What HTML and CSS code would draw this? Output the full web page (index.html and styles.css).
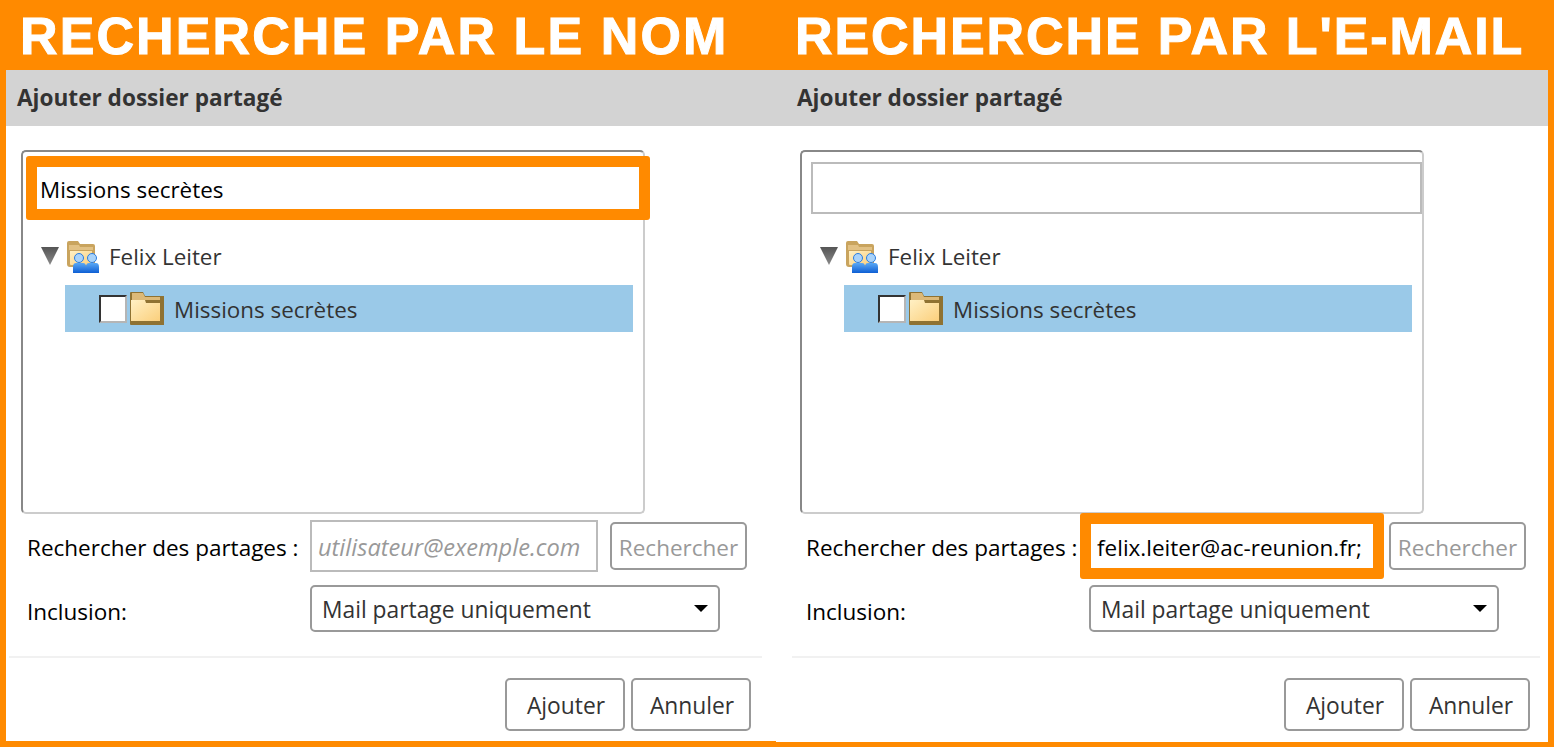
FILE: index.html
```html
<!DOCTYPE html>
<html lang="fr">
<head>
<meta charset="utf-8">
<title>Ajouter dossier partagé</title>
<link rel="stylesheet" href="styles.css">
</head>
<body>
<svg class="defs" width="0" height="0" aria-hidden="true">
  <defs>
    <linearGradient id="fold" x1="0" y1="0" x2="1" y2="1"><stop offset="0" stop-color="#fff0c4"/><stop offset="1" stop-color="#fbcf7c"/></linearGradient>
    <linearGradient id="user" x1="0" y1="0" x2="0" y2="1"><stop offset="0" stop-color="#5aa8f5"/><stop offset="1" stop-color="#0e5fd4"/></linearGradient>
    <linearGradient id="tri" x1="0" y1="0" x2="0" y2="1"><stop offset="0" stop-color="#555"/><stop offset="1" stop-color="#8a8a8a"/></linearGradient>
    <symbol id="shared" viewBox="0 0 32 33">
      <path d="M0 3q0-2 2-2h9l2 3h13q2 0 2 2v21H3q-3 0-3-3Z" fill="#c9a45e"/>
      <path d="M2 5h10l1 2h13v3H2Z" fill="#e2c184"/>
      <path d="M3 11h22v14H4q-1 0-1-1Z" fill="url(#fold)"/>
      <circle cx="12" cy="18" r="4.5" fill="#a9d3fa" stroke="#2b7de0"/>
      <circle cx="25" cy="18" r="4.5" fill="#a9d3fa" stroke="#2b7de0"/>
      <path d="M6 33v-6q0-4 3-4h7q3 0 3 4v6Z" fill="url(#user)"/>
      <path d="M19 33v-6q0-4 3-4h7q3 0 3 4v6Z" fill="url(#user)"/>
    </symbol>
    <symbol id="folder" viewBox="0 0 34 33">
      <path d="M1 0h12l2 4h19v29H1q-1 0-1-1V1q0-1 1-1Z" fill="#8f7232"/>
      <path d="M2 1h11l2 4h15v3H2Z" fill="#dcb978"/>
      <path d="M1 8h14l1 3h14v18H1Z" fill="url(#fold)"/>
    </symbol>
  </defs>
</svg>
<main class="frame">
  <section class="col col-name">
    <h1 class="banner">RECHERCHE PAR LE NOM</h1>
    <div class="dialog">
      <h2 class="dialog-title">Ajouter dossier partagé</h2>
      <div class="dialog-body">
        <div class="tree-box">
          <input class="filter filter-hot" type="text" value="Missions secrètes">
          <div class="tree-owner">
            <svg class="twisty" viewBox="0 0 18 18"><path d="M0 0H18L9 18Z" fill="url(#tri)"/></svg>
            <svg class="ico-shared"><use href="#shared"/></svg>
            <span>Felix Leiter</span>
          </div>
          <div class="tree-item">
            <span class="check"></span>
            <svg class="ico-folder"><use href="#folder"/></svg>
            <span>Missions secrètes</span>
          </div>
        </div>
        <div class="form-row row-search">
          <label class="field-label">Rechercher des partages :</label>
          <input class="mail" type="text" placeholder="utilisateur@exemple.com">
          <button class="btn btn-off" type="button">Rechercher</button>
        </div>
        <div class="form-row row-select">
          <label class="field-label">Inclusion:</label>
          <div class="select">Mail partage uniquement</div>
        </div>
      </div>
      <div class="dialog-foot">
        <button class="btn btn-foot" type="button">Ajouter</button>
        <button class="btn btn-foot" type="button">Annuler</button>
      </div>
    </div>
  </section>
  <section class="col col-mail">
    <h1 class="banner">RECHERCHE PAR L'E-MAIL</h1>
    <div class="dialog">
      <h2 class="dialog-title">Ajouter dossier partagé</h2>
      <div class="dialog-body">
        <div class="tree-box">
          <input class="filter" type="text">
          <div class="tree-owner">
            <svg class="twisty" viewBox="0 0 18 18"><path d="M0 0H18L9 18Z" fill="url(#tri)"/></svg>
            <svg class="ico-shared"><use href="#shared"/></svg>
            <span>Felix Leiter</span>
          </div>
          <div class="tree-item">
            <span class="check"></span>
            <svg class="ico-folder"><use href="#folder"/></svg>
            <span>Missions secrètes</span>
          </div>
        </div>
        <div class="form-row row-search">
          <label class="field-label">Rechercher des partages :</label>
          <input class="mail mail-hot" type="text" value="felix.leiter@ac-reunion.fr;">
          <button class="btn btn-off" type="button">Rechercher</button>
        </div>
        <div class="form-row row-select">
          <label class="field-label">Inclusion:</label>
          <div class="select">Mail partage uniquement</div>
        </div>
      </div>
      <div class="dialog-foot">
        <button class="btn btn-foot" type="button">Ajouter</button>
        <button class="btn btn-foot" type="button">Annuler</button>
      </div>
    </div>
  </section>
</main>
</body>
</html>
```
FILE: styles.css
```css
* { box-sizing: border-box; }
html, body { margin: 0; height: 747px; overflow: hidden; background: #ff8a00; }
body { font-family: "Open Sans", "Noto Sans", sans-serif; }
.defs { position: absolute; }
.frame { display: grid; grid-template-columns: 776px 778px; height: 747px; }
.col { display: flex; flex-direction: column; }
.col-name { padding-left: 6px; --title-inset: 11px; --body-inset: 15px; --rule-left: 3px; --rule-right: 14px; --foot-pad: 11px; --bottom: 6px; --track: 2.1px; }
.col-mail { padding-right: 6px; --title-inset: 21px; --body-inset: 24px; --rule-left: 16px; --rule-right: 8px; --foot-pad: 10px; --bottom: 5px; --track: 1.9px; }
.banner {
  margin: 0; height: 70px; font: 700 52px/72px "Liberation Sans", Arial, sans-serif;
  color: #fff; letter-spacing: var(--track); white-space: nowrap; -webkit-text-stroke: 1px #fff;
}
.col-name .banner { padding-left: 14px; }
.col-mail .banner { padding-left: 19px; }
.dialog { background: #fff; height: calc(677px - var(--bottom)); display: flex; flex-direction: column; }
.dialog-title {
  margin: 0; height: 56px; background: #d3d3d3; color: #333; padding-left: var(--title-inset);
  font-size: 22.6px; font-weight: 700; line-height: 56px;
}
.dialog-body { padding: 24px 0 0 var(--body-inset); }
.tree-box {
  width: 624px; height: 364px; border: 2px solid; border-color: #888 #ccc #ccc #888;
  border-radius: 5px; padding-top: 10px; color: #333; font-size: 22.4px;
}
.filter {
  display: block; width: 611px; height: 52px; margin-left: 9px; border: 2px solid #bbb;
  background: #fff; font: inherit; color: #000; padding: 2px 2px 0; outline: 0;
}
.filter-hot { width: 624px; height: 64px; margin: -6px 0 -6px 3px; border: 11px solid #ff8a00; border-radius: 3px; padding: 2px 3px 0; }
.tree-owner { display: flex; align-items: center; height: 32px; margin: 26px 0 0 18px; }
.twisty { width: 18px; height: 18px; margin-right: 8px; }
.ico-shared { width: 32px; height: 33px; margin-right: 10px; }
.tree-item { display: flex; align-items: center; height: 47px; width: 568px; margin: 13px 0 0 42px; background: #9ac9e8; padding: 1px 0 0 34px; }
.check { width: 28px; height: 28px; margin: -1px 3px 0 0; background: #fff; border: 2px solid; border-color: #333 #b5b5b5 #b5b5b5 #333; }
.ico-folder { width: 34px; height: 33px; margin: -1px 10px 0 0; }
.form-row { display: flex; align-items: center; font-size: 22.5px; }
.row-search { height: 52px; margin-top: 6px; }
.row-select { height: 47px; margin-top: 13px; }
.field-label { width: 289px; padding: 3px 0 0 6px; color: #000; white-space: nowrap; }
.row-select .field-label { padding-top: 6px; }
.mail { width: 288px; height: 52px; border: 2px solid #bbb; font: inherit; padding: 2px 6px 0; background: #fff; outline: 0; color: #000; }
.mail::placeholder { color: #999; font-style: italic; font-size: 23.6px; opacity: 1; }
.mail-hot { width: 304px; height: 66px; margin: 0 -7px 0 -9px; border: 11px solid #ff8a00; border-radius: 3px; padding: 2px 6px 0; }
.btn {
  background: #fff; border: 2px solid #999; border-radius: 5px; font: inherit; color: #333;
  padding: 2px 0 0; white-space: nowrap;
}
.btn-off { width: 137px; height: 48px; margin-left: 12px; color: #999; }
.select {
  position: relative; width: 410px; height: 47px; border: 2px solid #999; border-radius: 5px; background: #fff;
  color: #333; padding-left: 10px; font-size: 22.8px; line-height: 45px;
}
.select::after {
  content: ""; position: absolute; right: 10px; top: 18px;
  border: 7px solid transparent; border-top: 7px solid #000; border-bottom: 0;
}
.dialog-foot {
  margin: 24px var(--rule-right) 0 var(--rule-left); border-top: 2px solid #f1f1f1; padding: 20px var(--foot-pad) 0 0;
  display: flex; justify-content: flex-end; gap: 6px; font-size: 22.8px;
}
.btn-foot { width: 120px; height: 53px; padding-left: 2px; }
```
